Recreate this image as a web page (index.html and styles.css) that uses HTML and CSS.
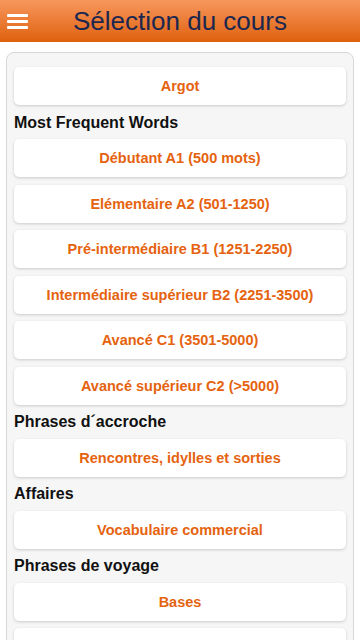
FILE: index.html
```html
<!DOCTYPE html>
<html>
<head lang="fr">
    <meta charset="UTF-8">
    <title>Sélection du cours</title>
    <link rel="stylesheet" href="styles.css">
</head>
<body>
<div class="header">
    <span class="menu">
        <i></i><i></i><i></i>
    </span>
    <h1>Sélection du cours</h1>
</div>

<div class="panel">
    <a class="btn">Argot</a>
    <h2>Most Frequent Words</h2>
    <a class="btn">Débutant A1 (500 mots)</a>
    <a class="btn">Elémentaire A2 (501-1250)</a>
    <a class="btn">Pré-intermédiaire B1 (1251-2250)</a>
    <a class="btn">Intermédiaire supérieur B2 (2251-3500)</a>
    <a class="btn">Avancé C1 (3501-5000)</a>
    <a class="btn">Avancé supérieur C2 (&gt;5000)</a>
    <h2>Phrases d´accroche</h2>
    <a class="btn">Rencontres, idylles et sorties</a>
    <h2>Affaires</h2>
    <a class="btn">Vocabulaire commercial</a>
    <h2>Phrases de voyage</h2>
    <a class="btn">Bases</a>
    <a class="btn"></a>
</div>
</body>
</html>
```

FILE: styles.css
```css
* {
    margin: 0;
    padding: 0;
}

body {
    font-family: "Liberation Sans", Arial, sans-serif;
    background: #fff;
    overflow: hidden;
}

.header {
    height: 42px;
    display: flex;
    align-items: center;
    background: linear-gradient(#f7975d, #df610e);
}

.menu {
    width: 21px;
    margin-left: 7px;
    display: flex;
    flex-direction: column;
    gap: 3px;
}

.menu i {
    display: block;
    height: 3px;
    background: #fff;
    border-radius: 1px;
}

.header h1 {
    margin-left: 45px;
    font-size: 26px;
    font-weight: normal;
    color: #1c2750;
    line-height: 42px;
}

.panel {
    margin: 10px 6px 0;
    padding: 14px 7px;
    border: 1px solid #d8d8d8;
    border-radius: 8px;
    background: #f6f6f6;
}

.btn {
    display: block;
    height: 38px;
    line-height: 38px;
    margin-bottom: 7.5px;
    text-align: center;
    font-size: 14.5px;
    font-weight: bold;
    color: #e5630f;
    background: #fff;
    border-radius: 5px;
    box-shadow: 0 1px 3px rgba(0, 0, 0, 0.18);
}

.panel h2 {
    font-size: 16px;
    line-height: 19px;
    margin-bottom: 7.5px;
    color: #111;
}
```
